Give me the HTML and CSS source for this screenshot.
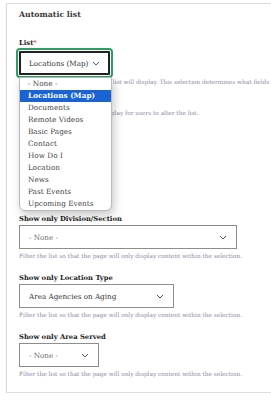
FILE: index.html
```html
<!DOCTYPE html>
<html lang="en">
<head>
    <meta charset="UTF-8">
    <meta name="viewport" content="width=device-width, initial-scale=1.0">
    <title>Automatic list</title>
    <link rel="stylesheet" href="styles.css">
</head>
<body>

<!-- Automatic list settings -->
<fieldset class="card">
    <legend class="card-title">Automatic list</legend>

    <div class="field">
        <label class="field-label list-label">List<span class="required">*</span></label>
        <div class="select-wrap">
            <div class="select focused">
                <span>Locations (Map)</span>
                <svg class="chevron blue" viewBox="0 0 8 5"><path d="M1 1l3 3 3-3" /></svg>
            </div>

            <!-- open dropdown menu -->
            <ul class="dropdown">
                <li>- None -</li>
                <li class="active">Locations (Map)</li>
                <li>Documents</li>
                <li>Remote Videos</li>
                <li>Basic Pages</li>
                <li>Contact</li>
                <li>How Do I</li>
                <li>Location</li>
                <li>News</li>
                <li>Past Events</li>
                <li>Upcoming Events</li>
            </ul>
        </div>
        <p class="field-desc">Choose the type of content this list will display. This selection determines what fields are available below.</p>
    </div>

    <!-- options covered by the open menu -->
    <div class="hidden-options">
        <div class="check-row"><span class="check"></span></div>
        <p class="field-desc">Show exposed filters on the display for users to alter the list.</p>
        <div class="check-row gap-sm"><span class="check checked"></span></div>
        <div class="check-row gap-md"><span class="check"></span></div>
        <div class="check-row gap-sm"><span class="check checked"></span></div>
        <div class="check-row gap-md"><span class="check"></span></div>
    </div>

    <div class="field">
        <label class="field-label">Show only Division/Section</label>
        <div class="select wide muted">
            <span>- None -</span>
            <svg class="chevron" viewBox="0 0 8 5"><path d="M1 1l3 3 3-3" /></svg>
        </div>
        <p class="field-desc">Filter the list so that the page will only display content within the selection.</p>
    </div>

    <div class="field">
        <label class="field-label">Show only Location Type</label>
        <div class="select medium">
            <span>Area Agencies on Aging</span>
            <svg class="chevron" viewBox="0 0 8 5"><path d="M1 1l3 3 3-3" /></svg>
        </div>
        <p class="field-desc">Filter the list so that the page will only display content within the selection.</p>
    </div>

    <div class="field">
        <label class="field-label">Show only Area Served</label>
        <div class="select small muted">
            <span>- None -</span>
            <svg class="chevron" viewBox="0 0 8 5"><path d="M1 1l3 3 3-3" /></svg>
        </div>
        <p class="field-desc">Filter the list so that the page will only display content within the selection.</p>
    </div>
</fieldset>

</body>
</html>
```

FILE: styles.css
```css
body {
    font-family: "DejaVu Serif", "Liberation Serif", serif;
    margin: 0;
    padding: 0;
    background-color: #fff;
    overflow: hidden;
    color: #333;
}
.card {
    width: 400px;
    margin: 3px 0 0 6px;
    padding: 20px 0 13px 12px;
    border: 1px solid #dcdce2;
    box-shadow: 0 1px 2px rgba(0,0,0,0.08);
    position: relative;
}
.card-title {
    position: absolute;
    top: 5px;
    left: 12px;
    padding: 0;
    font-size: 7.8px;
    font-weight: bold;
    line-height: 12px;
    color: #3a3a3a;
}
.field {
    margin-bottom: 12px;
}
.field:last-child {
    margin-bottom: 0;
}
.field-label {
    display: block;
    font-size: 6.8px;
    font-weight: bold;
    line-height: 10px;
    margin-bottom: 1px;
    color: #222;
}
.list-label {
    margin-top: 14px;
    margin-bottom: 3px;
}
.required {
    color: #d0342c;
    font-weight: normal;
}
.field-desc {
    margin: 2px 0 0;
    font-size: 5.8px;
    line-height: 10px;
    color: #8b8aa3;
    white-space: nowrap;
}
.select-wrap {
    position: relative;
    width: 91px;
}
.select {
    box-sizing: border-box;
    height: 24px;
    display: flex;
    align-items: center;
    justify-content: space-between;
    padding: 0 9px;
    border: 1px solid #8d8d8d;
    font-size: 7.2px;
    color: #333;
}
.select.focused {
    width: 91px;
    border: 2px solid #222;
    padding: 0 8px;
    outline: 2px solid #2aa062;
    outline-offset: 1px;
    border-radius: 1px;
}
.select.wide { width: 218px; }
.select.medium { width: 155px; }
.select.small { width: 80px; }
.select.muted { color: #6d6d6d; }
.chevron {
    width: 8px;
    height: 5px;
    fill: none;
    stroke: #555;
    stroke-width: 1;
}
.chevron.blue {
    stroke: #2f63c8;
}
.dropdown {
    position: absolute;
    top: 26px;
    left: 0;
    width: 91px;
    margin: 0;
    padding: 0;
    list-style: none;
    background-color: #fff;
    border: 1px solid #b9b9b9;
    border-radius: 0 0 6px 6px;
    box-shadow: 2px 4px 10px rgba(0,0,0,0.22);
    z-index: 2;
}
.dropdown li {
    height: 12px;
    line-height: 12px;
    padding-left: 8px;
    font-size: 7.3px;
    color: #444;
    white-space: nowrap;
}
.dropdown li.active {
    background-color: #1a63d4;
    color: #fff;
    font-weight: bold;
}
.hidden-options {
    padding-top: 9px;
    margin-top: -12px;
    margin-bottom: 28px;
}
.check-row {
    display: flex;
    align-items: center;
    height: 10px;
}
.check-row.gap-sm { margin-top: 4px; }
.check-row.gap-md { margin-top: 10px; }
.check {
    width: 7px;
    height: 7px;
    border: 1px solid #888;
    box-sizing: border-box;
}
.check.checked {
    background-color: #1a4fa8;
    border-color: #1a4fa8;
}
```
